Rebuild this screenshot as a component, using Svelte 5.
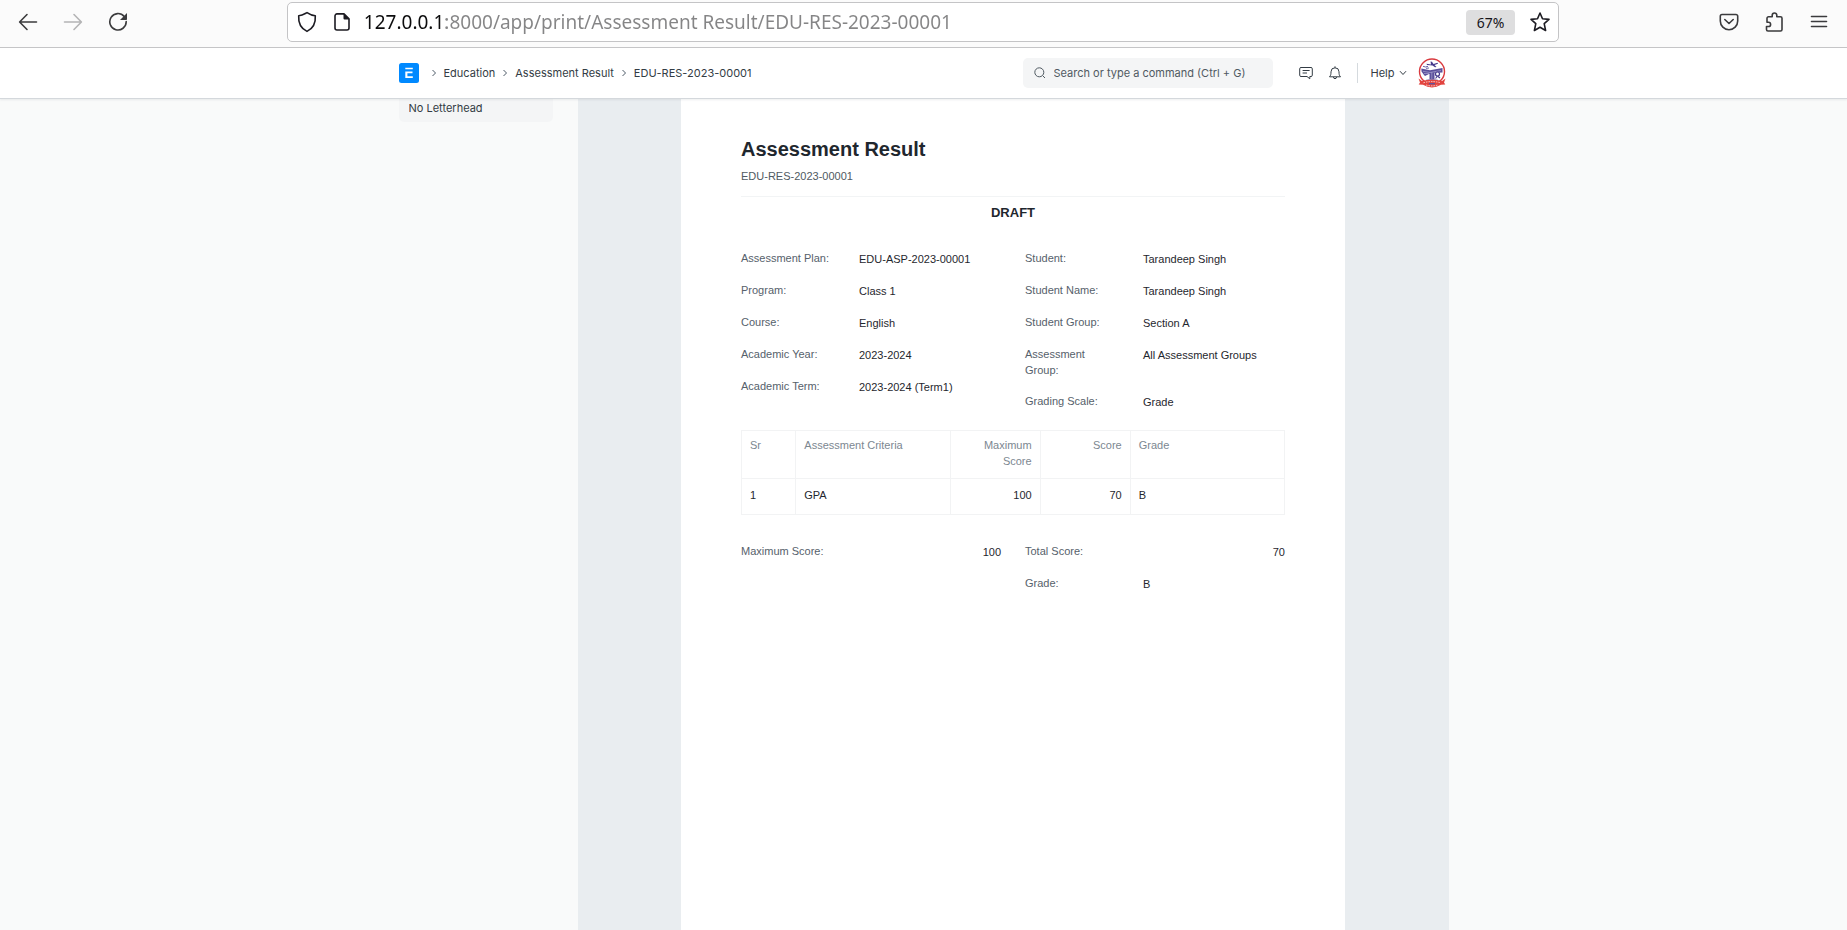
<script>
  const crumbs = ['Education', 'Assessment Result', 'EDU-RES-2023-00001'];

  const details = [
    [
      { label: 'Assessment Plan:', value: 'EDU-ASP-2023-00001' },
      { label: 'Program:', value: 'Class 1' },
      { label: 'Course:', value: 'English' },
      { label: 'Academic Year:', value: '2023-2024' },
      { label: 'Academic Term:', value: '2023-2024 (Term1)' }
    ],
    [
      { label: 'Student:', value: 'Tarandeep Singh' },
      { label: 'Student Name:', value: 'Tarandeep Singh' },
      { label: 'Student Group:', value: 'Section A' },
      { label: 'Assessment Group:', value: 'All Assessment Groups' },
      { label: 'Grading Scale:', value: 'Grade' }
    ]
  ];

  const totals = [
    [{ label: 'Maximum Score:', value: '100', numeric: true }],
    [
      { label: 'Total Score:', value: '70', numeric: true },
      { label: 'Grade:', value: 'B' }
    ]
  ];

  const rows = [{ criteria: 'GPA', maximum: 100, score: 70, grade: 'B' }];

  let address = $state('127.0.0.1:8000/app/print/Assessment Result/EDU-RES-2023-00001');
</script>

{#snippet chevron()}
  <svg class="chevron" viewBox="0 0 6 8" width="6" height="8" aria-hidden="true">
    <path d="M1.5 1 4.5 4 1.5 7" />
  </svg>
{/snippet}

{#snippet fields(columns)}
  <div class="columns">
    {#each columns as column}
      <dl>
        {#each column as item}
          <div class="field">
            <dt>{item.label}</dt>
            <dd class:numeric={item.numeric}>{item.value}</dd>
          </div>
        {/each}
      </dl>
    {/each}
  </div>
{/snippet}

<div class="window">
  <div class="toolbar">
    <div class="tools">
      <button aria-label="Back">
        <svg viewBox="0 0 20 20" width="20" height="20"><path d="M18.5 10H1.8M9 2.5 1.6 10 9 17.5" /></svg>
      </button>
      <button aria-label="Forward" disabled>
        <svg viewBox="0 0 20 20" width="20" height="20"><path d="M1.5 10H18.2M11 2.5 18.4 10 11 17.5" /></svg>
      </button>
      <button aria-label="Reload">
        <svg viewBox="0 0 20 20" width="20" height="20">
          <path d="M16.2 4.4A8.2 8.2 0 1 0 18.2 9.6" />
          <path class="solid" d="M19 1v6.2q0 .8-.8.8H12Z" />
        </svg>
      </button>
    </div>

    <div class="address">
      <svg class="dark" viewBox="0 0 20 22" width="20" height="22" aria-hidden="true">
        <path d="M10 1.6Q14.5 4.6 18.3 4.7C18.8 12 16.5 17.2 10 20.4 3.5 17.2 1.2 12 1.7 4.7 5.5 4.6 7.8 2.8 10 1.6Z" />
      </svg>
      <svg class="dark page-icon" viewBox="0 0 16 20" width="16" height="20" aria-hidden="true">
        <path d="M3 1.9h7l5 5V16a2 2 0 0 1-2 2H3a2 2 0 0 1-2-2V3.900a2 2 0 0 1 2-2Z" />
        <path class="solid" d="M9.500 1.500 15.500 7.500H10.500a1 1 0 0 1-1-1Z" />
      </svg>
      <input aria-label="Address" spellcheck="false" bind:value={address} />
      <button class="zoom">67%</button>
      <button class="bookmark" aria-label="Bookmark this page">
        <svg class="dark" viewBox="0 0 22 22" width="22" height="22">
          <path d="M11 2 13.500 7.700 20 8.400 15.200 12.700 16.600 19.500 11 16.200 5.400 19.500 6.800 12.700 2 8.400 8.500 7.700Z" />
        </svg>
      </button>
    </div>

    <div class="tools">
      <button aria-label="Save to Pocket">
        <svg viewBox="0 0 20 20" width="20" height="20">
          <path d="M3 2.500H17a1.700 1.700 0 0 1 1.700 1.700V9a8.700 8.700 0 0 1-17.400 0V4.200A1.700 1.700 0 0 1 3 2.500ZM5.800 7.500 10 11.500 14.200 7.500" />
        </svg>
      </button>
      <button aria-label="Extensions">
        <svg viewBox="0 0 20 22" width="20" height="22">
          <path d="M3 8.500V7.300A1.500 1.500 0 0 1 4.500 5.800H8.200V4.300a2.300 2.300 0 0 1 4.600 0V5.800H16.500A1.500 1.500 0 0 1 18 7.300V18.500A1.500 1.500 0 0 1 16.500 20H4A1.500 1.500 0 0 1 2.500 18.500V15.500H4.500a2.100 2.100 0 0 0 0-4.200H3V8.500" />
        </svg>
      </button>
      <button aria-label="Open application menu">
        <svg viewBox="0 0 20 20" width="20" height="20"><path d="M2.500 4.500h15M2.500 9.500h15M2.500 14.500h15" /></svg>
      </button>
    </div>
  </div>

  <header class="navbar">
    <div class="container nav-row">
      <a class="logo" href="#home" aria-label="Home">
        <svg viewBox="0 0 20 20" width="20" height="20">
          <rect width="20" height="20" rx="2.500" fill="#0089ff" />
          <path fill="#fff" d="M6.300 4.800h7.500v1.400H6.300ZM6.300 8.600h7.200v1.700H8.400v3h5.400v1.800H6.300Z" />
        </svg>
      </a>
      <nav class="crumbs" aria-label="Breadcrumb">
        {#each crumbs as crumb}
          {@render chevron()}
          <a href="#crumb">{crumb}</a>
        {/each}
      </nav>

      <label class="search">
        <svg viewBox="0 0 12 12" width="12" height="12" aria-hidden="true">
          <circle cx="5.300" cy="5.300" r="4.500" /><path d="M8.700 8.700 11 11" />
        </svg>
        <input type="text" aria-label="Search" placeholder="Search or type a command (Ctrl + G)" />
      </label>

      <button class="icon" aria-label="Chat">
        <svg viewBox="0 0 14 14" width="14" height="14">
          <path d="M2 1.500h10a1.300 1.300 0 0 1 1.300 1.300v6.400a1.300 1.300 0 0 1-1.300 1.300h-1.200v2.300L8 10.500H2A1.300 1.300 0 0 1 .7 9.200V2.800A1.300 1.300 0 0 1 2 1.500ZM3.600 4.500h7M3.600 7h4.400" />
        </svg>
      </button>
      <button class="icon" aria-label="Notifications">
        <svg viewBox="0 0 14 14" width="14" height="14">
          <path d="M1.500 10.800C2.800 9.500 3 8 3 5.800a4 4 0 0 1 8 0C11 8 11.200 9.500 12.500 10.800ZM5.500 11a1.500 1.700 0 0 0 3 0M7 .3v1.500" />
        </svg>
      </button>
      <span class="divider"></span>
      <button class="help">
        Help
        <svg viewBox="0 0 8 6" width="8" height="6" aria-hidden="true"><path d="M1 1.200 4 4.500 7 1.200" /></svg>
      </button>
      <button class="avatar" aria-label="User menu">
        <svg viewBox="0 0 28 30" width="28" height="30">
          <circle cx="14" cy="13.500" r="12.500" fill="#fff" stroke="#d93a3f" stroke-width="1.400" />
          <path fill="#5b509b" d="M3.300 10.500 12 12.300 24.500 10v4.500L16.500 14.800V21h-5v-5.200L7 18 6 17 3.500 13.500Z" />
          <path stroke="#a8a3d0" stroke-width=".7" fill="none" d="M5 13.300 12 14.500 23 12.500M13.800 14v7M6 15.500h5" />
          <path fill="#463a8c" d="M8.500 5.800 13 6.500 12.500 3.500 14 3.700 15.500 5.900 19.500 4.800 20 5.700 16.500 7 18.500 9 17 9.200 14.500 7.500 9 7Z" />
          <path stroke="#6a60a4" stroke-width="1" fill="none" d="M5 8.300 7.500 9 10 8.300M8 10.300 11 10" />
          <circle cx="19.500" cy="16" r="2" fill="#fff" stroke="#463a8c" stroke-width="1.200" />
          <path stroke="#463a8c" stroke-width="1.200" fill="none" d="M19.500 18 17.500 20.500M20 18.500 22 20" />
          <path stroke="#7d78b5" fill="none" d="M8 22.300Q14 20.500 20 22.300" />
          <path fill="#e2443f" d="M.5 20.500 4 23Q14 20.500 24 23L27.500 20.500 26 24.500 27.300 26.500 23 26.800Q14 32 5 26.800L.7 26.500 2 24.500Z" />
          <path stroke="#fbd3cf" fill="none" stroke-dasharray="1.500 1" d="M5.500 24.700Q14 22.500 22.500 24.700M8 27Q14 28.800 20 27" />
          <path stroke="#5a549c" stroke-width="1.300" d="M11 25.700h6" />
        </svg>
      </button>
    </div>
  </header>

  <main class="container">
    <aside>
      <select aria-label="Letter head">
        <option>No Letterhead</option>
      </select>
    </aside>
    <div class="preview">
      <article class="paper">
        <h1>Assessment Result</h1>
        <p class="docname">EDU-RES-2023-00001</p>
        <h2>DRAFT</h2>

        {@render fields(details)}

        <table>
          <colgroup>
            <col class="w-sr" /><col class="w-wide" /><col class="w-num" /><col class="w-num" /><col class="w-wide" />
          </colgroup>
          <thead>
            <tr>
              <th>Sr</th>
              <th>Assessment Criteria</th>
              <th class="numeric">Maximum Score</th>
              <th class="numeric">Score</th>
              <th>Grade</th>
            </tr>
          </thead>
          <tbody>
            {#each rows as row, i}
              <tr>
                <td>{i + 1}</td>
                <td>{row.criteria}</td>
                <td class="numeric">{row.maximum}</td>
                <td class="numeric">{row.score}</td>
                <td>{row.grade}</td>
              </tr>
            {/each}
          </tbody>
        </table>

        {@render fields(totals)}
      </article>
    </div>
  </main>
</div>

<style>
  :global(body) {
    margin: 0;
    background: #f9fafa;
  }

  .window {
    display: flex;
    flex-direction: column;
    min-height: 100vh;
    font: 11px/16px Inter, sans-serif;
    color: #333c44;
  }

  .window :global(*) {
    box-sizing: border-box;
  }

  button,
  input,
  select {
    margin: 0;
    padding: 0;
    border: 0;
    background: none;
    font: inherit;
    color: inherit;
  }

  svg {
    display: block;
    flex: none;
    fill: none;
    stroke: currentColor;
  }

  .logo svg,
  .avatar svg {
    stroke: none;
  }

  a {
    color: inherit;
    text-decoration: none;
  }

  /* Browser toolbar */
  .toolbar {
    display: flex;
    justify-content: space-between;
    height: 48px;
    padding: 2px 6px 5px 5px;
    border-bottom: 1px solid #c6c6c8;
    background: #fbfbfb;
    color: #3b3b3d;
  }

  .toolbar svg {
    stroke-width: 1.6;
    stroke-linecap: round;
    stroke-linejoin: round;
  }

  .toolbar .solid {
    fill: currentColor;
    stroke: none;
  }

  .dark {
    color: #1c1b22;
  }

  .tools {
    display: flex;
  }

  .tools button {
    display: grid;
    place-items: center;
    width: 45px;
  }

  .tools button:disabled {
    color: #b4b4b5;
  }

  .address {
    display: flex;
    align-items: center;
    width: 69.3%;
    height: 40px;
    padding: 0 7px 0 9px;
    border: 1px solid #c4c4c6;
    border-radius: 5px;
    background: #fff;
  }

  .page-icon {
    margin: 0 14px 0 17px;
  }

  .address input {
    flex: 1;
    min-width: 0;
    height: 36px;
    outline: none;
    font: 19px/36px "Noto Sans", sans-serif;
    /* The host is black, the rest of the address is grey. */
    background: linear-gradient(to right, #0c0c0d 82px, #858586 82px);
    background-clip: text;
    -webkit-text-fill-color: transparent;
  }

  .zoom {
    width: 49px;
    height: 25px;
    border-radius: 4px;
    background: #dededf;
    font: 14px/25px "Noto Sans", sans-serif;
    color: #15141a;
  }

  .bookmark {
    margin-left: 14px;
  }

  /* Application bar */
  .container {
    width: 100%;
    max-width: 1050px;
    margin: 0 auto;
  }

  .navbar {
    position: relative;
    z-index: 1;
    height: 51px;
    border-bottom: 1px solid #d4d8dc;
    background: #fff;
    box-shadow: 0 1px 2px rgba(25, 39, 52, 0.08);
  }

  .nav-row {
    display: flex;
    align-items: center;
    height: 50px;
  }

  .crumbs {
    display: flex;
    align-items: center;
    gap: 7px;
    margin-left: 12px;
    padding-bottom: 1px;
    white-space: nowrap;
  }

  .chevron {
    stroke: #4c5a67;
  }

  .search {
    display: flex;
    align-items: center;
    gap: 8px;
    width: 250px;
    height: 30px;
    margin-left: auto;
    padding: 0 11px;
    border-radius: 5px;
    background: #f4f5f6;
    color: #505a62;
  }

  .search input {
    flex: 1;
    min-width: 0;
    outline: none;
  }

  .search input::placeholder {
    color: #505a62;
    opacity: 1;
  }

  .icon {
    margin-left: 26px;
  }

  .icon + .icon {
    margin-left: 15px;
  }

  .divider {
    width: 1px;
    height: 20px;
    margin: 0 13px 0 15px;
    background: #d5dade;
  }

  .help {
    display: flex;
    align-items: center;
    gap: 4px;
  }

  .avatar {
    margin: 0 3px 0 11px;
  }

  /* Print view */
  main {
    display: flex;
    flex: 1;
    gap: 25px;
  }

  aside {
    width: 154px;
  }

  select {
    appearance: none;
    width: 100%;
    height: 23px;
    padding: 0 10px 5px;
    border-radius: 0 0 5px 5px;
    background: #f4f5f6;
  }

  .preview {
    display: flex;
    flex: 1;
    justify-content: center;
    background: #e9edf0;
  }

  .paper {
    width: 664px;
    padding: 40px 60px;
    background: #fff;
    font: 11px/16px "Liberation Sans", Arial, sans-serif;
    color: #1f272e;
  }

  h1,
  h2,
  p,
  dl,
  dd {
    margin: 0;
  }

  h1 {
    font-size: 20px;
    line-height: 20px;
  }

  .docname {
    padding: 9px 0 12px;
    border-bottom: 1px solid #f2f4f5;
    color: #505a62;
  }

  h2 {
    margin: 8px 0 29px;
    font-size: 13px;
    line-height: 16px;
    text-align: center;
  }

  .columns {
    display: grid;
    grid-template-columns: 1fr 1fr;
    gap: 24px;
  }

  .field {
    display: grid;
    grid-template-columns: 92px 1fr;
    gap: 26px;
    margin-bottom: 15px;
  }

  dt {
    color: #56616b;
  }

  dd {
    padding-top: 1px;
  }

  .numeric {
    text-align: right;
  }

  table {
    width: 100%;
    margin: 5px 0 28px;
    border-collapse: collapse;
    table-layout: fixed;
  }

  .w-sr {
    width: 10%;
  }

  .w-wide {
    width: 28.4%;
  }

  .w-num {
    width: 16.6%;
  }

  th,
  td {
    padding: 6px 8px 9px;
    border: 1px solid #f2f3f4;
    font-weight: 400;
    text-align: left;
    vertical-align: top;
  }

  th {
    color: #7c8791;
  }

  td {
    padding: 8px 8px 11px;
  }

  th.numeric,
  td.numeric {
    text-align: right;
  }
</style>
